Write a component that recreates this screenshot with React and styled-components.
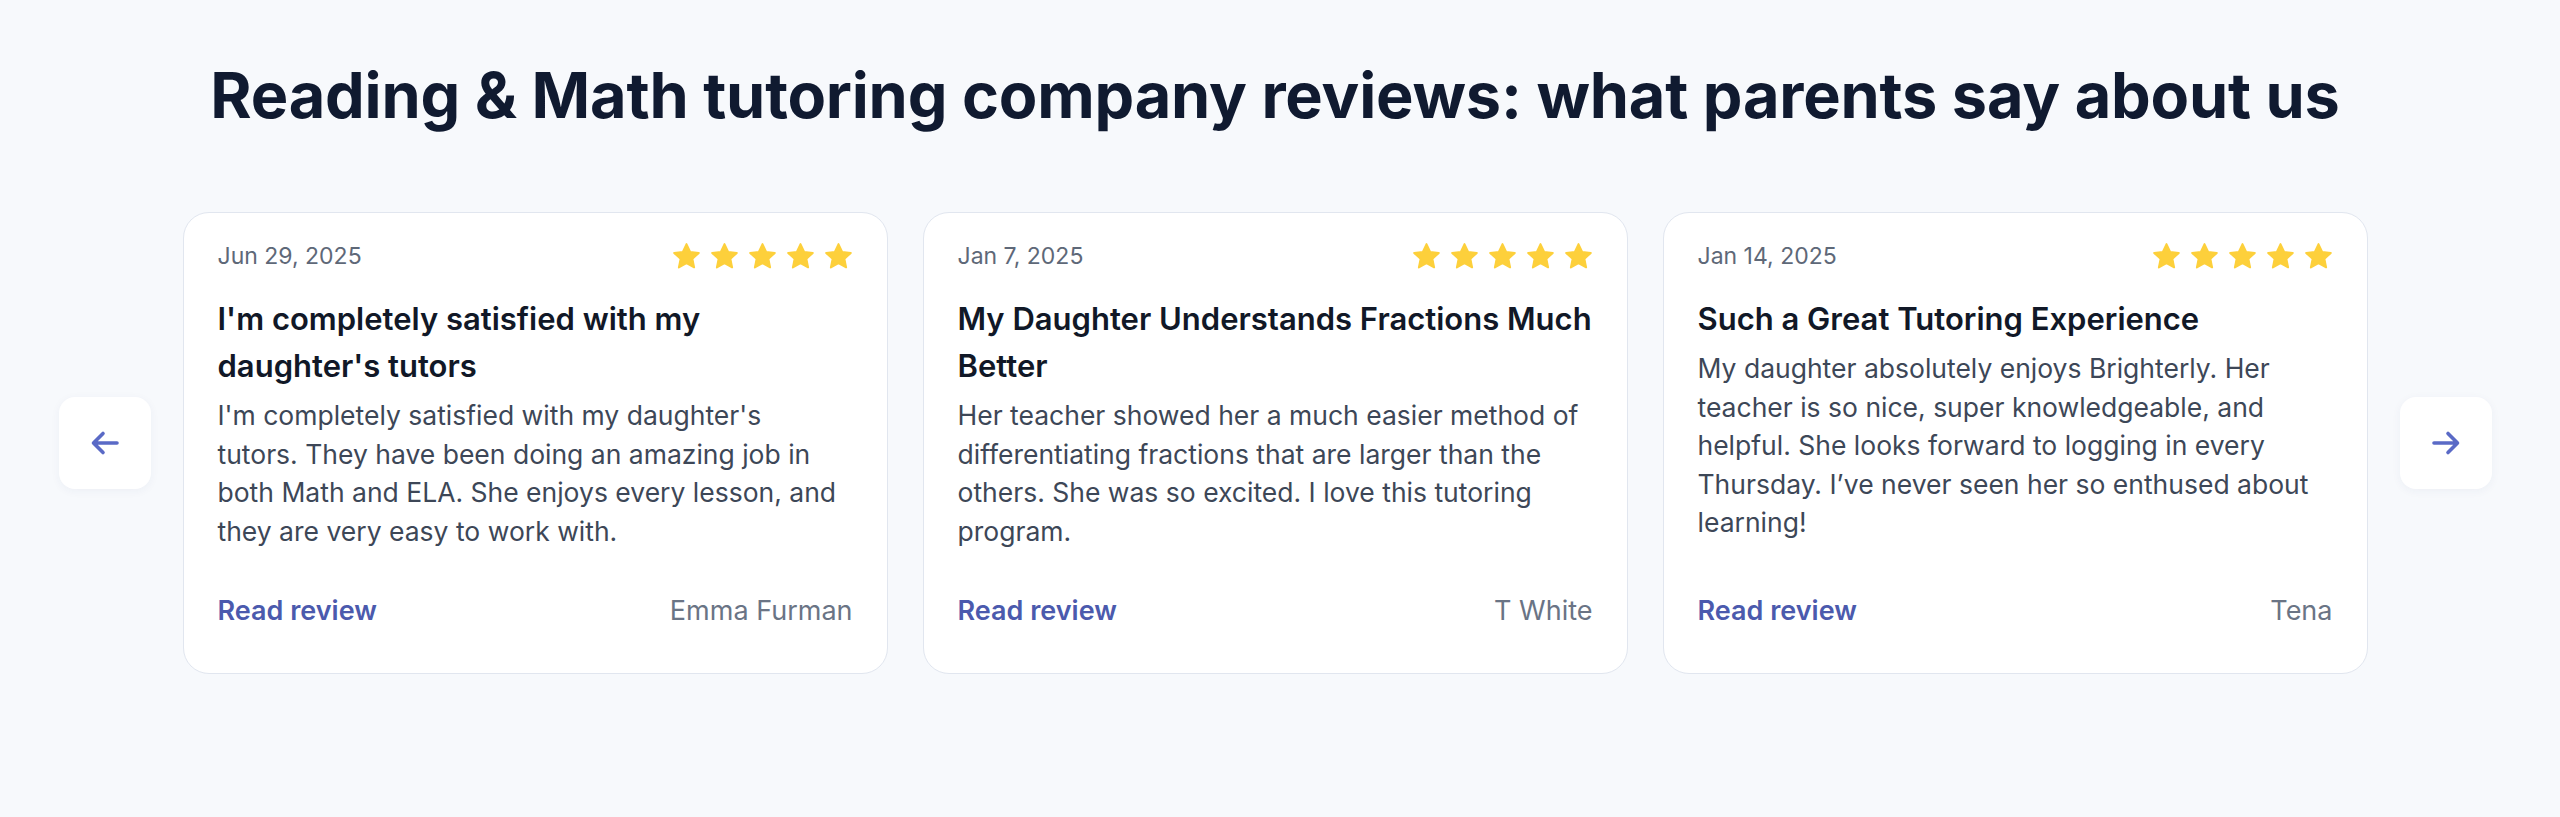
import React from "react";
import styled, { createGlobalStyle } from "styled-components";

const GlobalStyle = createGlobalStyle`
  html, body { margin: 0; padding: 0; background: #f7f9fc; }
  body { font-family: Inter, "Liberation Sans", sans-serif; -webkit-font-smoothing: antialiased; }
  * { box-sizing: border-box; }
`;

const Section = styled.section`
  display: flex;
  flex-direction: column;
  align-items: center;
  padding: 58px 10px 0 0;
  min-height: 817px;
`;

const Heading = styled.h2`
  margin: 0;
  font-size: 63px;
  line-height: 1.2;
  font-weight: 700;
  color: #101a30;
  letter-spacing: -0.2px;
  text-align: center;
  white-space: nowrap;
`;

const Carousel = styled.div`
  margin-top: 78px;
  display: flex;
  align-items: center;
  gap: 32px;
`;

const NavButton = styled.button`
  width: 92px;
  height: 92px;
  flex: none;
  border: none;
  border-radius: 16px;
  background: #ffffff;
  box-shadow: 0 2px 10px rgba(30, 50, 110, 0.05);
  display: flex;
  align-items: center;
  justify-content: center;
  color: #5a6ac6;
  cursor: pointer;
  padding: 0;
`;

const Track = styled.div`
  display: flex;
  gap: 35px;
`;

const Card = styled.article`
  width: 705px;
  height: 462px;
  background: #ffffff;
  border: 1.5px solid #e1e6ef;
  border-radius: 26px;
  padding: 28px 34px 47px;
  display: flex;
  flex-direction: column;
`;

const CardHeader = styled.div`
  height: 30px;
  display: flex;
  align-items: center;
  justify-content: space-between;
`;

const DateText = styled.span`
  font-size: 23px;
  color: #5e6878;
`;

const Stars = styled.div`
  display: flex;
  gap: 9px;
`;

const CardTitle = styled.h3`
  margin: 24px 0 0;
  font-size: 31px;
  line-height: 47px;
  font-weight: 600;
  color: #111827;
`;

const Body = styled.p`
  margin: 7.5px 0 0;
  font-size: 26.5px;
  line-height: 38.5px;
  color: #3d4757;
`;

const BodyLine = styled.span`
  display: block;
`;

const Footer = styled.div`
  margin-top: auto;
  height: 30px;
  display: flex;
  align-items: center;
  justify-content: space-between;
  font-size: 27px;
  line-height: 30px;
`;

const ReadLink = styled.a`
  color: #4b5aad;
  font-weight: 600;
  text-decoration: none;
`;

const Author = styled.span`
  color: #6a7485;
`;

const Star = () => (
  <svg width="29" height="28" viewBox="0 0 24 23" aria-hidden="true">
    <path
      fill="#fdd03b"
      stroke="#fdd03b"
      strokeWidth="1.6"
      strokeLinejoin="round"
      d="M12 1.6l3.05 6.55 7.15.85-5.3 4.9 1.42 7.05L12 17.4l-6.32 3.55L7.1 13.9 1.8 9l7.15-.85z"
    />
  </svg>
);

const Arrow = ({ dir }) => (
  <svg width="30" height="26" viewBox="0 0 30 26" aria-hidden="true"
    style={dir === "right" ? { transform: "scaleX(-1)" } : undefined}>
    <path
      d="M27 13H4M13 3.5L3.5 13 13 22.5"
      fill="none"
      stroke="currentColor"
      strokeWidth="3.6"
      strokeLinecap="round"
      strokeLinejoin="round"
    />
  </svg>
);

const reviews = [
  {
    date: "Jun 29, 2025",
    title: "I'm completely satisfied with my daughter's tutors",
    body: [
      "I'm completely satisfied with my daughter's",
      "tutors. They have been doing an amazing job in",
      "both Math and ELA. She enjoys every lesson, and",
      "they are very easy to work with.",
    ],
    author: "Emma Furman",
  },
  {
    date: "Jan 7, 2025",
    title: "My Daughter Understands Fractions Much Better",
    body: [
      "Her teacher showed her a much easier method of",
      "differentiating fractions that are larger than the",
      "others. She was so excited. I love this tutoring",
      "program.",
    ],
    author: "T White",
  },
  {
    date: "Jan 14, 2025",
    title: "Such a Great Tutoring Experience",
    body: [
      "My daughter absolutely enjoys Brighterly. Her",
      "teacher is so nice, super knowledgeable, and",
      "helpful. She looks forward to logging in every",
      "Thursday. I’ve never seen her so enthused about",
      "learning!",
    ],
    author: "Tena",
  },
];

export default function App() {
  return (
    <>
      <GlobalStyle />
      <Section>
        <Heading>Reading &amp; Math tutoring company reviews: what parents say about us</Heading>
        <Carousel>
          <NavButton aria-label="Previous">
            <Arrow dir="left" />
          </NavButton>
          <Track>
            {reviews.map((r) => (
              <Card key={r.title}>
                <CardHeader>
                  <DateText>{r.date}</DateText>
                  <Stars>
                    {[0, 1, 2, 3, 4].map((i) => (
                      <Star key={i} />
                    ))}
                  </Stars>
                </CardHeader>
                <CardTitle>{r.title}</CardTitle>
                <Body>
                  {r.body.map((line) => (
                    <BodyLine key={line}>{line}</BodyLine>
                  ))}
                </Body>
                <Footer>
                  <ReadLink href="#">Read review</ReadLink>
                  <Author>{r.author}</Author>
                </Footer>
              </Card>
            ))}
          </Track>
          <NavButton aria-label="Next">
            <Arrow dir="right" />
          </NavButton>
        </Carousel>
      </Section>
    </>
  );
}
